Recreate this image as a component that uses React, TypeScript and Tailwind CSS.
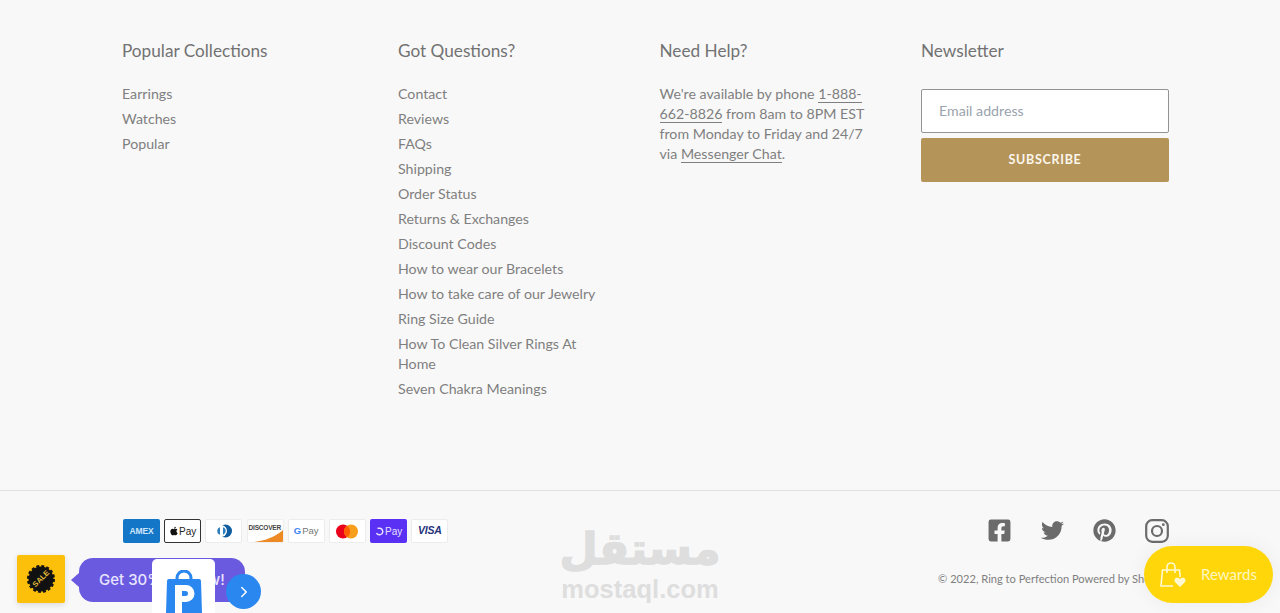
import { ChevronRight } from "lucide-react";
import { FaApple, FaFacebookSquare, FaTwitter, FaPinterest } from "react-icons/fa";

const collections = ["Earrings", "Watches", "Popular"];
const questions = [
  "Contact",
  "Reviews",
  "FAQs",
  "Shipping",
  "Order Status",
  "Returns & Exchanges",
  "Discount Codes",
  "How to wear our Bracelets",
  "How to take care of our Jewelry",
  "Ring Size Guide",
  "How To Clean Silver Rings At Home",
  "Seven Chakra Meanings",
];

function LinkList({ items }: { items: string[] }) {
  return (
    <ul className="mt-[22px] flex flex-col gap-[5px] text-[14.2px] leading-[20px] text-[#7f7f7f]">
      {items.map((item) => (
        <li key={item}>{item}</li>
      ))}
    </ul>
  );
}

function PayCard({ className, children }: { className?: string; children: React.ReactNode }) {
  return (
    <li className={`flex h-[24px] w-[37px] items-center justify-center overflow-hidden rounded-[2px] ${className ?? "border border-[#ececec] bg-white"}`}>
      {children}
    </li>
  );
}

function PaymentIcons() {
  return (
    <ul className="flex gap-[4.2px] font-['Liberation_Sans',sans-serif]">
      <PayCard className="bg-[#1476c6]">
        <span className="text-[8.5px] font-bold tracking-[-0.2px] text-[#cfe6fb]">AMEX</span>
      </PayCard>
      <PayCard className="border border-[#333] bg-white">
        <FaApple className="h-[10px] w-[10px] text-[#111]" />
        <span className="text-[10px] font-medium text-[#222]">Pay</span>
      </PayCard>
      <PayCard>
        <svg width="20" height="14" viewBox="0 0 20 14">
          <circle cx="11.500" cy="7" r="6.500" fill="#0f5c9e" />
          <circle cx="7" cy="7" r="6" fill="#fff" />
          <path d="M6 3.200a4 4 0 0 0 0 7.600zM9 3.200v7.600a4 4 0 0 0 0-7.600z" fill="#2e7ebc" />
        </svg>
      </PayCard>
      <PayCard className="relative border border-[#eee] bg-white">
        <span className="absolute top-[3px] left-[1px] text-[6.5px] font-bold tracking-[-0.2px] text-[#444]">DISCOVER</span>
        <svg className="absolute right-0 bottom-0" width="36" height="12" viewBox="0 0 36 12">
          <path d="M36 0v12H6C18 11 28 7 36 0z" fill="#ee8a23" />
        </svg>
      </PayCard>
      <PayCard>
        <span className="text-[9.5px] font-bold text-[#4285f4]">G</span>
        <span className="ml-[1px] text-[9.5px] text-[#777]">Pay</span>
      </PayCard>
      <PayCard>
        <svg width="24" height="15" viewBox="0 0 24 15">
          <circle cx="8" cy="7.500" r="7" fill="#eb001b" />
          <circle cx="16" cy="7.500" r="7" fill="#f79e1b" />
          <path d="M12 1.700a7 7 0 0 1 0 11.600 7 7 0 0 1 0-11.600z" fill="#ff5f00" />
        </svg>
      </PayCard>
      <PayCard className="bg-[#5a31f4]">
        <svg width="9" height="9" viewBox="0 0 9 9" fill="none" stroke="#e6e0ff" strokeWidth="1.500">
          <path d="M2.500 1.200h2a3.300 3.300 0 1 1-3 4.800" />
        </svg>
        <span className="ml-[1px] text-[10px] font-medium text-[#e6e0ff]">Pay</span>
      </PayCard>
      <PayCard>
        <span className="text-[10.5px] font-bold italic tracking-[-0.2px] text-[#26337a]">VISA</span>
      </PayCard>
    </ul>
  );
}

function SocialIcons() {
  return (
    <div className="flex items-center gap-[29px] text-[#6b6b6b]">
      <FaFacebookSquare className="h-[25px] w-[25px]" />
      <FaTwitter className="h-[23px] w-[23px]" />
      <FaPinterest className="h-[23px] w-[23px]" />
      <svg width="24" height="24" viewBox="0 0 24 24" fill="none" stroke="#6b6b6b" strokeWidth="2.200">
        <rect x="1.200" y="1.200" width="21.600" height="21.600" rx="6" />
        <circle cx="12" cy="12" r="5" />
        <circle cx="18.300" cy="5.700" r="1.400" fill="#6b6b6b" stroke="none" />
      </svg>
    </div>
  );
}

function Rewards() {
  return (
    <div className="absolute top-[546px] left-[1144px] flex h-[57px] w-[129px] items-center rounded-full bg-[#ffd60a] pl-[15px] shadow-[0_0_20px_rgba(0,0,0,0.06)]">
      <svg width="28" height="28" viewBox="0 0 28 28" fill="none" stroke="#fff8d0" strokeWidth="1.600">
        <path d="M14 25H2L3.500 9h17l.8 7" />
        <path d="M8 12V6a4 4 0 0 1 8 0v6" />
        <path d="M21 26l-5-5c-2-3 2-6 5-3 3-3 7 0 5 3z" fill="#fff8d0" stroke="none" />
      </svg>
      <span className="ml-[14px] text-[15px] text-[#fff6c2]">Rewards</span>
    </div>
  );
}

function Promo() {
  return (
    <>
      <div className="absolute top-[555px] left-[17px] flex h-[48px] w-[48px] items-center justify-center rounded-[2px] bg-[#fdc00a] shadow-[0_2px_6px_rgba(0,0,0,0.12)]">
        <svg width="30" height="30" viewBox="0 0 30 30">
          <circle cx="15" cy="15" r="12.500" fill="#111" />
          <circle cx="15" cy="15" r="13" fill="none" stroke="#111" strokeWidth="2" strokeDasharray="3 2.100" />
        </svg>
        <span className="absolute -rotate-45 font-['Liberation_Sans',sans-serif] text-[7.500px] font-bold text-[#e0b93a]">SALE</span>
      </div>
      <div className="absolute top-[558px] left-[79px] flex h-[44px] w-[166px] items-center rounded-[14px] bg-[#6a5ae0] pl-[20px] font-['Inter',sans-serif] text-[15px] font-medium text-[#e8e4ff]">
        <span className="absolute top-[15px] -left-[8px] h-0 w-0 border-y-[7px] border-r-[8px] border-y-transparent border-r-[#6a5ae0]" />
        Get 30% off now!
      </div>
      <div className="absolute top-[559px] left-[152px] flex h-[60px] w-[63px] justify-center rounded-t-[5px] bg-white pt-[11px]">
        <svg width="36" height="43" viewBox="0 0 36 43">
          <path d="M11 10V8a7 7 0 0 1 14 0v2" fill="none" stroke="#2b87f0" strokeWidth="3" />
          <path d="M3 9h30a2 2 0 0 1 2 2l1 32H0l1-32a2 2 0 0 1 2-2z" fill="#2b87f0" />
          <path d="M9 15h11a8.500 8.500 0 0 1 0 17h-4v11H9zM16 21v5h3.500a2.500 2.500 0 0 0 0-5z" fill="#fff" fillRule="evenodd" />
        </svg>
      </div>
      <div className="absolute top-[574px] left-[226px] flex h-[35px] w-[35px] items-center justify-center rounded-full bg-[#2b87f0]">
        <ChevronRight className="h-[18px] w-[18px] text-white" strokeWidth={2} />
      </div>
    </>
  );
}

export default function App() {
  return (
    <div className="relative h-[613px] w-full overflow-hidden bg-[#f8f8f8] font-['Lato','Open_Sans',sans-serif] text-[#7f7f7f]">
      <div className="ml-[122px] grid w-[1047px] grid-cols-[276px_261.5px_261.5px_248px] pt-[40px]">
        <section className="pr-[40px]">
          <h4 className="text-[17.2px] leading-[22px] text-[#727272]">Popular Collections</h4>
          <LinkList items={collections} />
        </section>
        <section className="pr-[55px]">
          <h4 className="text-[17.2px] leading-[22px] text-[#727272]">Got Questions?</h4>
          <LinkList items={questions} />
        </section>
        <section className="pr-[50px]">
          <h4 className="text-[17.2px] leading-[22px] text-[#727272]">Need Help?</h4>
          <p className="mt-[22px] text-[14.2px] leading-[20px]">
            We're available by phone <span className="border-b border-[#7f7f7f]">1-888-662-8826</span> from 8am to 8PM EST from Monday to Friday and 24/7 via <span className="border-b border-[#7f7f7f]">Messenger Chat</span>.
          </p>
        </section>
        <section>
          <h4 className="text-[17.2px] leading-[22px] text-[#727272]">Newsletter</h4>
          <div className="mt-[27px] flex h-[44px] items-center rounded-[2px] border border-[#949494] bg-white px-[17px] pb-[1px] text-[14.2px] text-[#9aa3ad]">Email address</div>
          <button className="mt-[5px] h-[44px] w-full rounded-[2px] bg-[#b5945a] text-[12.5px] font-bold tracking-[0.7px] text-[#fbf6ec]">SUBSCRIBE</button>
        </section>
      </div>

      <footer className="absolute inset-x-0 top-[490px] border-t border-[#e1e1e1]">
        <div className="ml-[122px] flex w-[1047px] items-start justify-between pt-[27px]">
          <div className="pt-[1px] pl-[1px]">
            <PaymentIcons />
          </div>
          <div className="flex flex-col items-end">
            <SocialIcons />
            <p className="mt-[29px] text-[11.1px] leading-[14px] whitespace-nowrap text-[#7f7f7f]">© 2022, Ring to Perfection Powered by Shopify</p>
          </div>
        </div>
      </footer>

      <div className="absolute top-[520px] left-[562px] flex w-[156px] flex-col items-center text-[#dedede]">
        <span className="font-['DejaVu_Sans',sans-serif] text-[44px] leading-[58px] font-bold [-webkit-text-stroke:1.5px_#dedede]" dir="rtl">مستقل</span>
        <span className="font-['Liberation_Sans',sans-serif] text-[25.500px] leading-[22px] font-bold whitespace-nowrap">mostaql.com</span>
      </div>

      <Promo />
      <Rewards />
    </div>
  );
}
